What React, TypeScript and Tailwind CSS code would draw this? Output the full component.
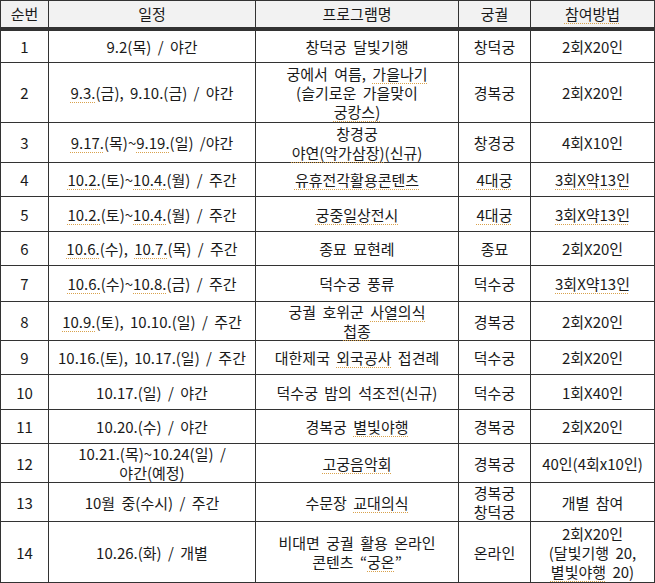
import React from 'react';

// spell-check style squiggle under words
function S({ children }: { children: React.ReactNode }) {
  return (
    <span className="underline decoration-dotted decoration-[#d9a24c] decoration-[1px] underline-offset-[3px]">
      {children}
    </span>
  );
}

type Row = {
  no: number;
  h: string;
  date: React.ReactNode;
  name: React.ReactNode;
  palace: React.ReactNode;
  how: React.ReactNode;
};

const rows: Row[] = [
  { no: 1, h: 'h-[34px]', date: '9.2(목) / 야간', name: '창덕궁 달빛기행', palace: '창덕궁', how: '2회X20인' },
  {
    no: 2,
    h: 'h-[60px]',
    date: <><S>9.3.</S>(금), 9.10.(금) / 야간</>,
    name: <>궁에서 여름, <S>가을나기</S><br />(슬기로운 가을맞이<br /><S>궁캉스)</S></>,
    palace: '경복궁',
    how: '2회X20인'
  },
  {
    no: 3,
    h: 'h-[40px]',
    date: <><S>9.17.</S>(목)~<S>9.19.</S>(일) /야간</>,
    name: <>창경궁<br /><S>야연(악가삼장)</S>(신규)</>,
    palace: '창경궁',
    how: '4회X10인'
  },
  {
    no: 4,
    h: 'h-[34px]',
    date: <><S>10.2.</S>(토)~<S>10.4.</S>(월) / 주간</>,
    name: <S>유휴전각활용콘텐츠</S>,
    palace: <S>4대궁</S>,
    how: <S>3회X약13인</S>
  },
  {
    no: 5,
    h: 'h-[35px]',
    date: <><S>10.2.</S>(토)~<S>10.4.</S>(월) / 주간</>,
    name: <S>궁중일상전시</S>,
    palace: <S>4대궁</S>,
    how: <S>3회X약13인</S>
  },
  {
    no: 6,
    h: 'h-[34px]',
    date: <><S>10.6.</S>(수), <S>10.7.</S>(목) / 주간</>,
    name: '종묘 묘현례',
    palace: '종묘',
    how: '2회X20인'
  },
  {
    no: 7,
    h: 'h-[36px]',
    date: <><S>10.6.</S>(수)~<S>10.8.</S>(금) / 주간</>,
    name: '덕수궁 풍류',
    palace: '덕수궁',
    how: <S>3회X약13인</S>
  },
  {
    no: 8,
    h: 'h-[39px]',
    date: <><S>10.9.</S>(토), 10.10.(일) / 주간</>,
    name: <>궁궐 호위군 <S>사열의식</S><br /><S>첩종</S></>,
    palace: '경복궁',
    how: '2회X20인'
  },
  {
    no: 9,
    h: 'h-[34px]',
    date: '10.16.(토), 10.17.(일) / 주간',
    name: <>대한제국 <S>외국공사</S> 접견례</>,
    palace: '덕수궁',
    how: '2회X20인'
  },
  { no: 10, h: 'h-[35px]', date: '10.17.(일) / 야간', name: '덕수궁 밤의 석조전(신규)', palace: '덕수궁', how: '1회X40인' },
  { no: 11, h: 'h-[34px]', date: '10.20.(수) / 야간', name: <>경복궁 <S>별빛야행</S></>, palace: '경복궁', how: '2회X20인' },
  {
    no: 12,
    h: 'h-[39px]',
    date: <>10.21.(목)~10.24(일) /<br />야간(예정)</>,
    name: <S>고궁음악회</S>,
    palace: '경복궁',
    how: '40인(4회x10인)'
  },
  {
    no: 13,
    h: 'h-[39px]',
    date: '10월 중(수시) / 주간',
    name: <>수문장 <S>교대의식</S></>,
    palace: <>경복궁<br />창덕궁</>,
    how: '개별 참여'
  },
  {
    no: 14,
    h: 'h-[61px]',
    date: '10.26.(화) / 개별',
    name: <>비대면 궁궐 활용 온라인<br />콘텐츠 “<S>궁온</S>”</>,
    palace: '온라인',
    how: <>2회X20인<br />(달빛기행 20,<br /><S>별빛야행</S> 20)</>
  }
];

const td = 'border border-[#333333] text-center align-middle p-0 whitespace-nowrap';

export default function App() {
  return (
    <div
      className="w-[655px] h-[583px] bg-white text-[#1a1a1a] text-[15px] leading-[19px] [word-spacing:3px]"
      style={{ fontFamily: '"Noto Sans CJK KR", "Noto Sans", sans-serif' }}
    >
      <table className="table-fixed border-collapse w-[654px]">
        <colgroup>
          <col className="w-[48px]" />
          <col className="w-[207px]" />
          <col className="w-[203px]" />
          <col className="w-[72px]" />
          <col className="w-[124px]" />
        </colgroup>
        <thead>
          <tr className="h-[28px] bg-[#f2f2f2]">
            <th className={`${td} font-normal border-b-[4px] border-b-double`}>순번</th>
            <th className={`${td} font-normal border-b-[4px] border-b-double`}>일정</th>
            <th className={`${td} font-normal border-b-[4px] border-b-double`}>프로그램명</th>
            <th className={`${td} font-normal border-b-[4px] border-b-double`}>궁궐</th>
            <th className={`${td} font-normal border-b-[4px] border-b-double`}>
              <S>참여방법</S>
            </th>
          </tr>
        </thead>
        <tbody>
          {rows.map((r) => (
            <tr key={r.no} className={r.h}>
              <td className={td}>{r.no}</td>
              <td className={td}>{r.date}</td>
              <td className={td}>{r.name}</td>
              <td className={td}>{r.palace}</td>
              <td className={td}>{r.how}</td>
            </tr>
          ))}
        </tbody>
      </table>
    </div>
  );
}
